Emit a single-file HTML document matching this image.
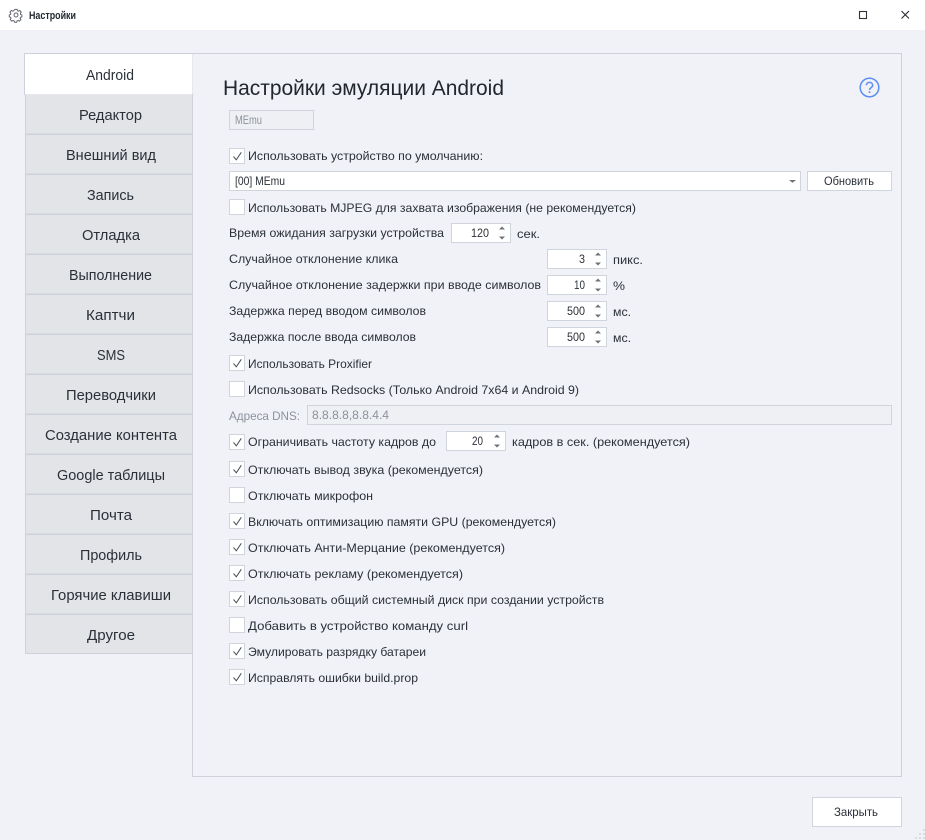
<!DOCTYPE html>
<html lang="ru"><head><meta charset="utf-8"><title>Настройки</title>
<style>
html,body{margin:0;padding:0;background:#f0f2f7;width:925px;height:840px;overflow:hidden}
svg{display:block}
text{font-family:"Liberation Sans",sans-serif;font-size:12px;fill:#2b3038;white-space:pre}
.t{font-size:14.5px;text-anchor:start;fill:#2b3038}
.g{fill:#8c929c}
.box{fill:#fff;stroke:#d0d4dc;stroke-width:1}
.tab{fill:#e3e4e8;stroke:#ccd1da;stroke-width:1}
.ck{fill:none;stroke:#494e56;stroke-width:1}
.ar{fill:#6d7178}
</style></head><body>
<svg width="925" height="840" viewBox="0 0 925 840" xmlns="http://www.w3.org/2000/svg">
<rect width="925" height="840" fill="#f0f2f7"/>
<rect width="925" height="30" fill="#fff"/>
<!-- gear -->
<g fill="none" stroke="#62666d" stroke-width="1.200" transform="translate(16 15) scale(.82) translate(-16 -15)">
<circle cx="16" cy="15" r="2.400"/>
<path d="M14.600 8.600h2.800l.4 1.700 1.300.6 1.600-.9 1.700 2-1.100 1.400.3 1.400 1.600.6v2.400l-1.600.5-.5 1.400.9 1.500-1.900 1.800-1.500-.9-1.300.6-.5 1.600h-2.600l-.5-1.600-1.300-.6-1.500.9-1.900-1.800.9-1.500-.5-1.400-1.600-.5v-2.400l1.600-.6.3-1.400-1.100-1.400 1.700-2 1.600.9 1.300-.6z" transform="translate(0 -.5)"/>
</g>
<text x="29" y="19" textLength="47" lengthAdjust="spacingAndGlyphs" style="font-size:11px;font-weight:bold;fill:#1f2630">Настройки</text>
<!-- window buttons -->
<rect x="859.500" y="11.500" width="7" height="7" fill="none" stroke="#30343a" stroke-width="1.100"/>
<path d="M901.500 11l7.500 7.500M909 11l-7.500 7.500" stroke="#30343a" stroke-width="1.200" fill="none"/>
<!-- panel -->
<rect x="192.500" y="53.500" width="709" height="723" fill="#f0f2f7" stroke="#ccd1da"/>
<!-- tabs -->
<rect x="25.500" y="94.500" width="167" height="39.500" class="tab"/>
<rect x="25.500" y="134.500" width="167" height="39.500" class="tab"/>
<rect x="25.500" y="174.500" width="167" height="39.500" class="tab"/>
<rect x="25.500" y="214.500" width="167" height="39.500" class="tab"/>
<rect x="25.500" y="254.500" width="167" height="39.500" class="tab"/>
<rect x="25.500" y="294.500" width="167" height="39.500" class="tab"/>
<rect x="25.500" y="334.500" width="167" height="39.500" class="tab"/>
<rect x="25.500" y="374.500" width="167" height="39.500" class="tab"/>
<rect x="25.500" y="414.500" width="167" height="39.500" class="tab"/>
<rect x="25.500" y="454.500" width="167" height="39.500" class="tab"/>
<rect x="25.500" y="494.500" width="167" height="39.500" class="tab"/>
<rect x="25.500" y="534.500" width="167" height="39.500" class="tab"/>
<rect x="25.500" y="574.500" width="167" height="39.500" class="tab"/>
<rect x="25.500" y="614.500" width="167" height="39" class="tab"/>
<path d="M192.500 94V53.500H24.500V94.500H193V94" fill="#fff" stroke="#ccd1da"/>
<rect x="25" y="54" width="167.500" height="40.500" fill="#fff"/>
<path d="M24.500 54V94.500" stroke="#ccd1da"/>
<text class="t" x="86" y="80" textLength="48" lengthAdjust="spacingAndGlyphs">Android</text>
<text class="t" x="79" y="120" textLength="63" lengthAdjust="spacingAndGlyphs">Редактор</text>
<text class="t" x="66" y="160" textLength="90" lengthAdjust="spacingAndGlyphs">Внешний вид</text>
<text class="t" x="87" y="200" textLength="47" lengthAdjust="spacingAndGlyphs">Запись</text>
<text class="t" x="82" y="240" textLength="58" lengthAdjust="spacingAndGlyphs">Отладка</text>
<text class="t" x="69" y="280" textLength="83" lengthAdjust="spacingAndGlyphs">Выполнение</text>
<text class="t" x="86" y="320" textLength="49" lengthAdjust="spacingAndGlyphs">Каптчи</text>
<text class="t" x="97" y="360" textLength="28" lengthAdjust="spacingAndGlyphs">SMS</text>
<text class="t" x="66" y="400" textLength="90" lengthAdjust="spacingAndGlyphs">Переводчики</text>
<text class="t" x="45" y="440" textLength="132" lengthAdjust="spacingAndGlyphs">Создание контента</text>
<text class="t" x="57" y="480" textLength="108" lengthAdjust="spacingAndGlyphs">Google таблицы</text>
<text class="t" x="90" y="520" textLength="42" lengthAdjust="spacingAndGlyphs">Почта</text>
<text class="t" x="80" y="560" textLength="62" lengthAdjust="spacingAndGlyphs">Профиль</text>
<text class="t" x="51" y="600" textLength="120" lengthAdjust="spacingAndGlyphs">Горячие клавиши</text>
<text class="t" x="87" y="640" textLength="48" lengthAdjust="spacingAndGlyphs">Другое</text>
<!-- heading -->
<text x="223" y="95" textLength="281" lengthAdjust="spacingAndGlyphs" style="font-size:21.500px;fill:#22272e">Настройки эмуляции Android</text>
<!-- help -->
<circle cx="869.500" cy="87.500" r="9.300" fill="none" stroke="#5d8ef2" stroke-width="1.500"/>
<path d="M866.400 85.300c0-1.800 1.400-2.900 3.100-2.900s3.100 1.100 3.100 2.800c0 1.400-.9 2-1.800 2.700-.8.600-1.300 1.100-1.300 2.100" fill="none" stroke="#5d8ef2" stroke-width="1.500"/>
<rect x="868.700" y="91.300" width="1.700" height="1.700" fill="#5d8ef2"/>
<!-- MEmu -->
<rect x="229.500" y="110.500" width="84" height="19" fill="#eef0f4" stroke="#d0d4dc"/>
<text class="g" x="235" y="124" textLength="27" lengthAdjust="spacingAndGlyphs">MEmu</text>
<!-- row 1 -->
<rect x="229.500" y="148.500" width="15" height="15" class="box"/><path d="M233.500 156.500l2.800 3.300 5-7.500" class="ck"/>
<text x="248" y="160" textLength="235" lengthAdjust="spacingAndGlyphs">Использовать устройство по умолчанию:</text>
<!-- combo -->
<rect x="229.500" y="171.500" width="571" height="19" class="box"/>
<text x="235" y="185" textLength="50" lengthAdjust="spacingAndGlyphs">[00] MEmu</text>
<path d="M789 180h7l-3.500 2.800z" class="ar"/>
<rect x="807.500" y="171.500" width="84" height="19" class="box"/>
<text x="824" y="185" textLength="50" lengthAdjust="spacingAndGlyphs">Обновить</text>
<!-- MJPEG -->
<rect x="229.500" y="199.500" width="15" height="15" class="box"/>
<text x="248" y="212" textLength="388" lengthAdjust="spacingAndGlyphs">Использовать MJPEG для захвата изображения (не рекомендуется)</text>
<!-- spinners -->
<text x="229" y="237" textLength="215" lengthAdjust="spacingAndGlyphs">Время ожидания загрузки устройства</text>
<rect x="451.500" y="223.500" width="59" height="19" class="box"/>
<text x="471" y="237" textLength="18" lengthAdjust="spacingAndGlyphs">120</text>
<path d="M499 229.500l3-3 3 3zM499 236.500h6l-3 3z" class="ar"/>
<text x="517" y="238" textLength="23" lengthAdjust="spacingAndGlyphs">сек.</text>

<text x="229" y="263" textLength="169" lengthAdjust="spacingAndGlyphs">Случайное отклонение клика</text>
<rect x="547.500" y="249.500" width="59" height="19" class="box"/>
<text x="579" y="263" textLength="6" lengthAdjust="spacingAndGlyphs">3</text>
<path d="M595 255.500l3-3 3 3zM595 262.500h6l-3 3z" class="ar"/>
<text x="613" y="264" textLength="30" lengthAdjust="spacingAndGlyphs">пикс.</text>

<text x="229" y="289" textLength="312" lengthAdjust="spacingAndGlyphs">Случайное отклонение задержки при вводе символов</text>
<rect x="547.500" y="275.500" width="59" height="19" class="box"/>
<text x="574" y="289" textLength="11" lengthAdjust="spacingAndGlyphs">10</text>
<path d="M595 281.500l3-3 3 3zM595 288.500h6l-3 3z" class="ar"/>
<text x="613" y="290" textLength="12" lengthAdjust="spacingAndGlyphs">%</text>

<text x="229" y="315" textLength="197" lengthAdjust="spacingAndGlyphs">Задержка перед вводом символов</text>
<rect x="547.500" y="301.500" width="59" height="19" class="box"/>
<text x="567" y="315" textLength="18" lengthAdjust="spacingAndGlyphs">500</text>
<path d="M595 307.500l3-3 3 3zM595 314.500h6l-3 3z" class="ar"/>
<text x="613" y="316" textLength="18" lengthAdjust="spacingAndGlyphs">мс.</text>

<text x="229" y="341" textLength="187" lengthAdjust="spacingAndGlyphs">Задержка после ввода символов</text>
<rect x="547.500" y="327.500" width="59" height="19" class="box"/>
<text x="567" y="341" textLength="18" lengthAdjust="spacingAndGlyphs">500</text>
<path d="M595 333.500l3-3 3 3zM595 340.500h6l-3 3z" class="ar"/>
<text x="613" y="342" textLength="18" lengthAdjust="spacingAndGlyphs">мс.</text>

<!-- checks -->
<rect x="229.500" y="355.500" width="15" height="15" class="box"/><path d="M233.500 363.500l2.800 3.300 5-7.500" class="ck"/>
<text x="248" y="368" textLength="124" lengthAdjust="spacingAndGlyphs">Использовать Proxifier</text>
<rect x="229.500" y="381.500" width="15" height="15" class="box"/>
<text x="248" y="394" textLength="331" lengthAdjust="spacingAndGlyphs">Использовать Redsocks (Только Android 7x64 и Android 9)</text>
<text class="g" x="229" y="420" textLength="71" lengthAdjust="spacingAndGlyphs">Адреса DNS:</text>
<rect x="307.500" y="405.500" width="584" height="19" fill="#eef0f4" stroke="#d0d4dc"/>
<text class="g" x="312" y="419" textLength="77" lengthAdjust="spacingAndGlyphs">8.8.8.8,8.8.4.4</text>

<rect x="229.500" y="434.500" width="15" height="15" class="box"/><path d="M233.500 442.500l2.800 3.300 5-7.500" class="ck"/>
<text x="248" y="446" textLength="188" lengthAdjust="spacingAndGlyphs">Ограничивать частоту кадров до</text>
<rect x="446.500" y="431.500" width="59" height="19" class="box"/>
<text x="472" y="445" textLength="11" lengthAdjust="spacingAndGlyphs">20</text>
<path d="M494 437.500l3-3 3 3zM494 444.500h6l-3 3z" class="ar"/>
<text x="512" y="446" textLength="178" lengthAdjust="spacingAndGlyphs">кадров в сек. (рекомендуется)</text>

<rect x="229.500" y="461.500" width="15" height="15" class="box"/><path d="M233.500 469.500l2.800 3.300 5-7.500" class="ck"/>
<text x="248" y="474" textLength="235" lengthAdjust="spacingAndGlyphs">Отключать вывод звука (рекомендуется)</text>
<rect x="229.500" y="487.500" width="15" height="15" class="box"/>
<text x="248" y="500" textLength="125" lengthAdjust="spacingAndGlyphs">Отключать микрофон</text>
<rect x="229.500" y="513.500" width="15" height="15" class="box"/><path d="M233.500 521.500l2.800 3.300 5-7.500" class="ck"/>
<text x="248" y="526" textLength="308" lengthAdjust="spacingAndGlyphs">Включать оптимизацию памяти GPU (рекомендуется)</text>
<rect x="229.500" y="539.500" width="15" height="15" class="box"/><path d="M233.500 547.500l2.800 3.300 5-7.500" class="ck"/>
<text x="248" y="552" textLength="257" lengthAdjust="spacingAndGlyphs">Отключать Анти-Мерцание (рекомендуется)</text>
<rect x="229.500" y="565.500" width="15" height="15" class="box"/><path d="M233.500 573.500l2.800 3.300 5-7.500" class="ck"/>
<text x="248" y="578" textLength="215" lengthAdjust="spacingAndGlyphs">Отключать рекламу (рекомендуется)</text>
<rect x="229.500" y="591.500" width="15" height="15" class="box"/><path d="M233.500 599.500l2.800 3.300 5-7.500" class="ck"/>
<text x="248" y="604" textLength="356" lengthAdjust="spacingAndGlyphs">Использовать общий системный диск при создании устройств</text>
<rect x="229.500" y="617.500" width="15" height="15" class="box"/>
<text x="248" y="630" textLength="220" lengthAdjust="spacingAndGlyphs">Добавить в устройство команду curl</text>
<rect x="229.500" y="643.500" width="15" height="15" class="box"/><path d="M233.500 651.500l2.800 3.300 5-7.500" class="ck"/>
<text x="248" y="656" textLength="178" lengthAdjust="spacingAndGlyphs">Эмулировать разрядку батареи</text>
<rect x="229.500" y="669.500" width="15" height="15" class="box"/><path d="M233.500 677.500l2.800 3.300 5-7.500" class="ck"/>
<text x="248" y="682" textLength="170" lengthAdjust="spacingAndGlyphs">Исправлять ошибки build.prop</text>
<!-- close -->
<rect x="812.500" y="797.500" width="89" height="29" class="box"/>
<text x="834" y="816" textLength="44" lengthAdjust="spacingAndGlyphs">Закрыть</text>
<!-- grip -->
<g fill="#d8dbe2"><rect x="923" y="829" width="2" height="2"/><rect x="919" y="833" width="2" height="2"/><rect x="923" y="833" width="2" height="2"/><rect x="915" y="837" width="2" height="2"/><rect x="919" y="837" width="2" height="2"/><rect x="923" y="837" width="2" height="2"/></g>
</svg>
</body></html>
